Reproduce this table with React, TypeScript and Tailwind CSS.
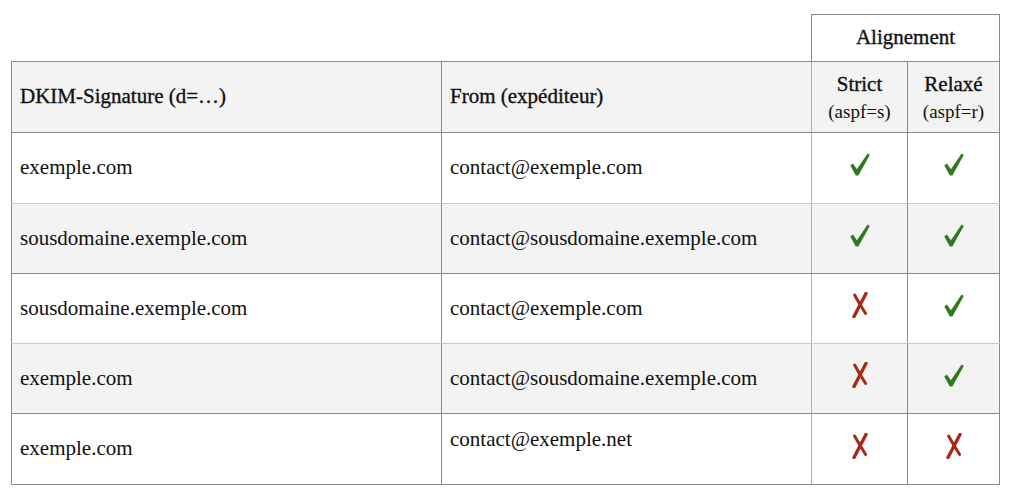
const rows = [
  { dkim: "exemple.com", from: "contact@exemple.com", strict: true, relaxed: true },
  { dkim: "sousdomaine.exemple.com", from: "contact@sousdomaine.exemple.com", strict: true, relaxed: true },
  { dkim: "sousdomaine.exemple.com", from: "contact@exemple.com", strict: false, relaxed: true },
  { dkim: "exemple.com", from: "contact@sousdomaine.exemple.com", strict: false, relaxed: true },
  { dkim: "exemple.com", from: "contact@exemple.net", strict: false, relaxed: false, top: true },
];

// check / cross drawn to match the reference glyphs
function Mark({ ok }: { ok: boolean }) {
  return ok ? (
    <svg width="20" height="23" viewBox="0 0 20 23" className="mx-auto block">
      <path d="M0.3 12.6 L2.9 10.6 L6.9 16.2 L17.6 0.6 L19.8 2.1 L8.4 22.4 L5.8 22.4 Z" fill="#2f7a1f" />
    </svg>
  ) : (
    <svg width="16" height="26" viewBox="0 0 16 26" className="mx-auto block">
      <path d="M14 1.5 L2 24.5" stroke="#a8281a" strokeWidth="3.4" strokeLinecap="round" fill="none" />
      <path d="M2.6 3 Q7 11 13.6 21.5" stroke="#a8281a" strokeWidth="3" strokeLinecap="round" fill="none" />
    </svg>
  );
}

export default function App() {
  return (
    <div className="min-h-[498px] bg-white pl-[11px] pt-[14px] font-['Liberation_Serif',serif] text-[21px] text-[#111]">
      <table className="w-[988px] table-fixed border-collapse">
        <colgroup>
          <col className="w-[430px]" />
          <col className="w-[370px]" />
          <col className="w-[96px]" />
          <col className="w-[92px]" />
        </colgroup>
        <thead>
          <tr className="h-[47px]">
            <th colSpan={2} className="border-0 p-0" />
            <th
              colSpan={2}
              className="border border-[#8a8a8a] bg-white p-0 text-center font-normal [-webkit-text-stroke:0.35px]"
            >
              Alignement
            </th>
          </tr>
          <tr className="h-[71px] bg-[#f3f3f3]">
            <th className="border border-[#8a8a8a] px-2 text-left font-normal [-webkit-text-stroke:0.35px]">
              DKIM-Signature (d=…)
            </th>
            <th className="border border-[#8a8a8a] border-r-[#b0b0b0] px-2 text-left font-normal [-webkit-text-stroke:0.35px]">
              From (expéditeur)
            </th>
            <th className="border border-[#8a8a8a] p-0 text-center font-normal">
              <div className="flex flex-col items-center pt-[2px] leading-[27px]">
                <span className="[-webkit-text-stroke:0.35px]">Strict</span>
                <span className="text-[19px]">(aspf=s)</span>
              </div>
            </th>
            <th className="border border-[#8a8a8a] p-0 text-center font-normal">
              <div className="flex flex-col items-center pt-[2px] leading-[27px]">
                <span className="[-webkit-text-stroke:0.35px]">Relaxé</span>
                <span className="text-[19px]">(aspf=r)</span>
              </div>
            </th>
          </tr>
        </thead>
        <tbody>
          {rows.map((r, i) => {
            const under = i === 0 || i === 2 ? "border-b-[#cacaca]" : "";
            return (
              <tr
                key={i}
                className={`${i === 0 || i === 4 ? "h-[71px]" : "h-[70px]"} ${i % 2 === 1 ? "bg-[#f3f3f3]" : "bg-white"}`}
              >
                <td className={`border border-[#8a8a8a] px-2 ${under}`}>{r.dkim}</td>
                <td
                  className={`border border-[#8a8a8a] border-r-[#b0b0b0] px-2 ${under} ${r.top ? "pt-[10px] align-top" : ""}`}
                >
                  {r.from}
                </td>
                <td className={`border border-[#8a8a8a] pb-[7px] text-center ${under}`}>
                  <Mark ok={r.strict} />
                </td>
                <td className={`border border-[#8a8a8a] pb-[7px] text-center ${under}`}>
                  <Mark ok={r.relaxed} />
                </td>
              </tr>
            );
          })}
        </tbody>
      </table>
    </div>
  );
}
